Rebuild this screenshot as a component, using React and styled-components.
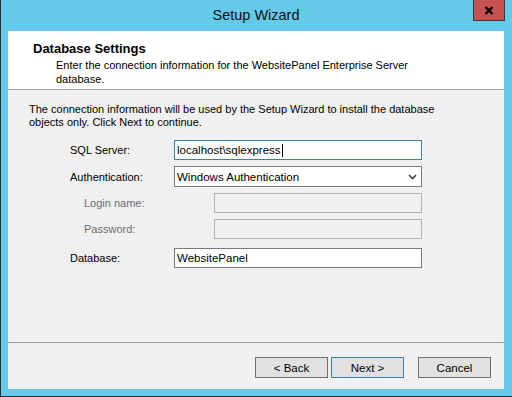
import React from 'react';
import styled, { createGlobalStyle } from 'styled-components';

const GlobalStyle = createGlobalStyle`
  html, body {
    margin: 0;
    padding: 0;
    background: #ffffff;
  }
  body {
    font-family: 'Liberation Sans', Arial, sans-serif;
  }
`;

const COLORS = {
  frame: '#65c9ea',
  frameEdge: '#2b2b2b',
  face: '#f0f0f0',
  line: '#a0a0a0',
  text: '#000000',
  disabled: '#6d6d6d',
  focus: '#3c7fb1'
};

const Window = styled.div`
  box-sizing: border-box;
  width: 512px;
  height: 397px;
  position: relative;
  display: flex;
  flex-direction: column;
  background: ${COLORS.frame};
  border-left: 1px solid ${COLORS.frameEdge};
  border-bottom: 1px solid ${COLORS.frameEdge};
  padding: 0 8px 7px 7px;
`;

const TitleBar = styled.div`
  height: 31px;
  display: flex;
  align-items: center;
  justify-content: center;
  font-size: 14.5px;
  color: #111111;
  padding-bottom: 1px;
  box-sizing: border-box;
`;

const CloseButton = styled.div`
  position: absolute;
  top: 0;
  right: 7px;
  width: 32px;
  height: 21px;
  box-sizing: border-box;
  background: #c75050;
  border: 1px solid #3a3a3a;
  border-top: none;
  display: flex;
  align-items: center;
  justify-content: center;
`;

const Client = styled.div`
  flex: 1;
  display: flex;
  flex-direction: column;
  background: ${COLORS.face};
  font-size: 11px;
  color: ${COLORS.text};
`;

const Header = styled.div`
  height: 59px;
  box-sizing: border-box;
  background: #ffffff;
  border-bottom: 1px solid ${COLORS.line};
  padding: 10px 0 0 25px;
`;

const HeaderTitle = styled.div`
  font-weight: bold;
  font-size: 13px;
  line-height: 15px;
`;

const HeaderText = styled.div`
  margin-top: 3px;
  padding-left: 23px;
  width: 360px;
  line-height: 13.5px;
`;

const Body = styled.div`
  flex: 1;
  padding: 13px 0 0 21px;
`;

const Intro = styled.p`
  margin: 0;
  width: 420px;
  line-height: 13px;
`;

const Form = styled.div`
  margin: 11px 0 0 41px;
  width: 352px;
  display: flex;
  flex-direction: column;
  gap: 6px;
`;

const Row = styled.div`
  display: flex;
  align-items: center;
  padding-left: ${props => (props.indent ? '14px' : '0')};
  margin-top: ${props => props.spaced || 0}px;
`;

const Label = styled.div`
  flex: none;
  width: ${props => (props.indent ? '130px' : '104px')};
  color: ${props => (props.disabled ? COLORS.disabled : COLORS.text)};
`;

const Field = styled.div`
  flex: 1;
  height: ${props => props.h || 20}px;
  box-sizing: border-box;
  border: 1px solid ${props => (props.focused ? COLORS.focus : props.disabled ? '#b4b4b4' : '#7a7a7a')};
  background: ${props => (props.disabled ? COLORS.face : '#ffffff')};
  display: flex;
  align-items: center;
  padding: 0 4px 0 2px;
  font-size: 11.5px;
`;

const Caret = styled.span`
  display: inline-block;
  width: 1px;
  height: 13px;
  background: #000000;
  margin-left: 1px;
`;

const SelectText = styled.span`
  flex: 1;
`;

const Footer = styled.div`
  height: 47px;
  box-sizing: border-box;
  border-top: 1px solid ${COLORS.line};
  display: flex;
  justify-content: flex-end;
  align-items: flex-start;
  padding: 14px 13px 0 0;
`;

const Button = styled.div`
  width: 73px;
  height: 21px;
  box-sizing: border-box;
  background: #e1e1e1;
  border: 1px solid ${props => (props.primary ? COLORS.focus : '#707070')};
  display: flex;
  align-items: center;
  justify-content: center;
  font-size: 11.5px;
  margin-left: ${props => props.gap || 0}px;
`;

const Chevron = () => (
  <svg width="9" height="6" viewBox="0 0 9 6">
    <path d="M1 1 L4.5 4.5 L8 1" fill="none" stroke="#404040" strokeWidth="1.6" />
  </svg>
);

const CloseGlyph = () => (
  <svg width="10" height="9" viewBox="0 0 10 9">
    <path d="M1.5 1 L8.5 8 M8.5 1 L1.5 8" stroke="#000000" strokeWidth="2.2" />
  </svg>
);

const App = () => (
  <React.Fragment>
    <GlobalStyle />
    <Window>
      <TitleBar>Setup Wizard</TitleBar>
      <CloseButton>
        <CloseGlyph />
      </CloseButton>
      <Client>
        <Header>
          <HeaderTitle>Database Settings</HeaderTitle>
          <HeaderText>
            Enter the connection information for the WebsitePanel Enterprise Server database.
          </HeaderText>
        </Header>
        <Body>
          <Intro>
            The connection information will be used by the Setup Wizard to install the database
            objects only. Click Next to continue.
          </Intro>
          <Form>
            <Row>
              <Label>SQL Server:</Label>
              <Field focused>
                localhost\sqlexpress
                <Caret />
              </Field>
            </Row>
            <Row>
              <Label>Authentication:</Label>
              <Field h={21}>
                <SelectText>Windows Authentication</SelectText>
                <Chevron />
              </Field>
            </Row>
            <Row indent>
              <Label indent disabled>
                Login name:
              </Label>
              <Field disabled />
            </Row>
            <Row indent>
              <Label indent disabled>
                Password:
              </Label>
              <Field disabled />
            </Row>
            <Row spaced={3}>
              <Label>Database:</Label>
              <Field>WebsitePanel</Field>
            </Row>
          </Form>
        </Body>
        <Footer>
          <Button>&lt; Back</Button>
          <Button primary gap={3}>
            Next &gt;
          </Button>
          <Button gap={14}>Cancel</Button>
        </Footer>
      </Client>
    </Window>
  </React.Fragment>
);

export default App;
